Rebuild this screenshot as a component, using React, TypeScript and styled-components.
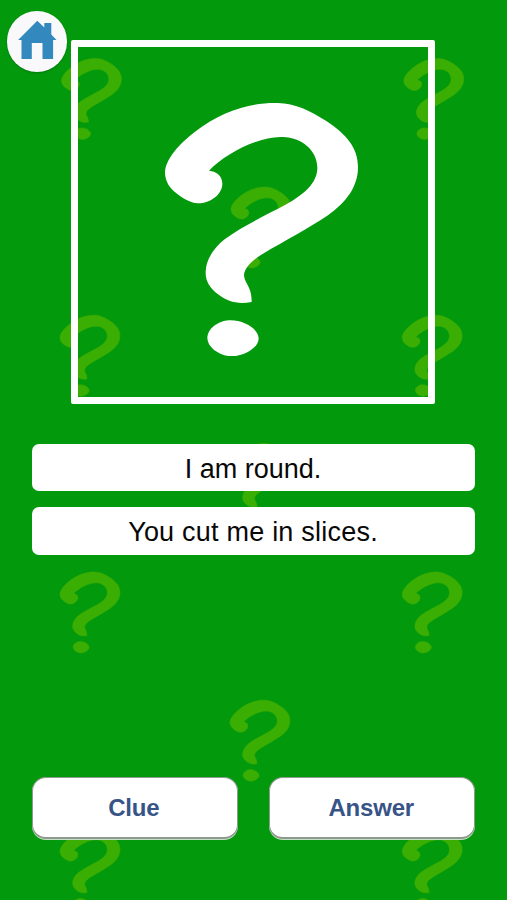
import React from 'react';
import styled, { createGlobalStyle } from 'styled-components';

const GlobalStyle = createGlobalStyle`
  *, *::before, *::after { box-sizing: border-box; }
  html, body { margin: 0; padding: 0; background: #03990d; overflow: hidden; }
`;

const Screen = styled.main`
  position: relative;
  isolation: isolate;
  width: 507px;
  height: 900px;
  overflow: hidden;
  display: flex;
  flex-direction: column;
  justify-content: space-between;
  padding: 39.6px 31.6px 61.4px;
  background: #03990d;
  font-family: "Liberation Sans", Arial, sans-serif;
`;

const Backdrop = styled.svg`
  position: absolute;
  inset: 0;
  z-index: -1;
  fill: #3bae03;
  stroke: #3bae03;
  stroke-width: 5;
`;

const HomeButton = styled.button`
  position: absolute;
  left: 6.5px;
  top: 11px;
  width: 60.5px;
  height: 60.5px;
  padding: 0;
  border: 0;
  border-radius: 50%;
  background: #f9f9fc;
  box-shadow: 0 1px 2px rgba(0, 50, 0, 0.3);
  svg { display: block; }
`;

const Riddle = styled.section`
  display: flex;
  flex-direction: column;
  align-items: center;
`;

const PictureFrame = styled.div`
  width: 364px;
  height: 364px;
  margin-right: 1px;
  border: 7px solid #fff;
  border-radius: 2px;
  display: flex;
  padding: 56px 0 0 87.2px;
`;

const ClueList = styled.ul`
  list-style: none;
  align-self: stretch;
  margin: 40.4px 0 0;
  padding: 0;
  display: flex;
  flex-direction: column;
  gap: 16px;
`;

const ClueItem = styled.li<{ $spacing: number }>`
  height: 47.3px;
  padding-right: 1px;
  border-radius: 7px;
  background: #fff;
  color: #080808;
  font-size: 27px;
  line-height: 51px;
  text-align: center;
  letter-spacing: ${({ $spacing }) => $spacing}px;
`;

const Actions = styled.nav`
  display: grid;
  grid-template-columns: 1fr 1fr;
  gap: 31px;
`;

const ActionButton = styled.button`
  height: 62px;
  padding: 2px 2px 0 0;
  border: 1.5px solid #8f9a8f;
  border-bottom-width: 2px;
  border-radius: 14px;
  background: #fff;
  box-shadow: 0 1px 0 #c5dfc5;
  color: #385487;
  font: bold 24px/1 "Liberation Sans", Arial, sans-serif;
  letter-spacing: -0.2px;
`;

const HOOK =
  'M178 241 C202 243 218 258 218 280 C218 312 182 339 145 339 C118 338 94 320 72 302 C56 288 46 268 46 246 C48 205 90 160 135 125 C215 62 300 38 375 38 C430 36 480 60 530 92 C590 132 625 172 625 230 C625 290 590 335 535 375 C480 412 400 455 340 490 C315 505 283 530 283 555 C285 580 307 590 306 635 C265 643 235 635 205 612 C180 592 167 572 168 545 C168 510 190 475 225 447 C280 405 350 375 410 342 C460 313 503 280 503 232 C503 180 455 141 400 140 C330 136 225 190 178 241 Z';
const DOT =
  'M238 690 C280 688 327 715 327 745 C325 775 280 798 245 798 C210 796 173 772 173 742 C174 715 205 692 238 690 Z';

const MARKS: [number, number][] = [
  [61.5, 58.5], [403.8, 58.5],
  [231, 187],
  [60, 315.3], [402.2, 315.3],
  [230, 443.4],
  [60, 572], [402.2, 572],
  [230, 700.2],
  [60, 829], [402.2, 829],
];

const CLUES = [
  { text: 'I am round.', spacing: 0 },
  { text: 'You cut me in slices.', spacing: 0.22 },
];

export default function App() {
  return (
    <>
      <GlobalStyle />
      <Screen>
        <Backdrop width="507" height="900" viewBox="0 0 507 900" aria-hidden="true">
          {MARKS.map(([x, y]) => (
            <g key={`${x}-${y}`} transform={`translate(${x} ${y}) scale(0.1035 0.1065) translate(-46 -38)`}>
              <path d={HOOK} />
              <path d={DOT} />
            </g>
          ))}
        </Backdrop>

        <HomeButton aria-label="Home">
          <svg width="60.5" height="60.5" viewBox="6.5 11 60.5 60.5" fill="#3388be">
            <path d="M36.8 20.8 L43.8 27.6 V23 H50.8 V34.5 L56 40 H52.6 V59 H42 V43 H31.3 V59 H21 V40 H17.6 Z" />
          </svg>
        </HomeButton>

        <Riddle>
          <PictureFrame>
            <svg width="193" height="253.4" viewBox="46 38 579 760" fill="#fff" role="img" aria-label="Question mark">
              <path d={HOOK} />
              <path d={DOT} />
            </svg>
          </PictureFrame>
          <ClueList>
            {CLUES.map((clue) => (
              <ClueItem key={clue.text} $spacing={clue.spacing}>{clue.text}</ClueItem>
            ))}
          </ClueList>
        </Riddle>

        <Actions>
          <ActionButton>Clue</ActionButton>
          <ActionButton>Answer</ActionButton>
        </Actions>
      </Screen>
    </>
  );
}
